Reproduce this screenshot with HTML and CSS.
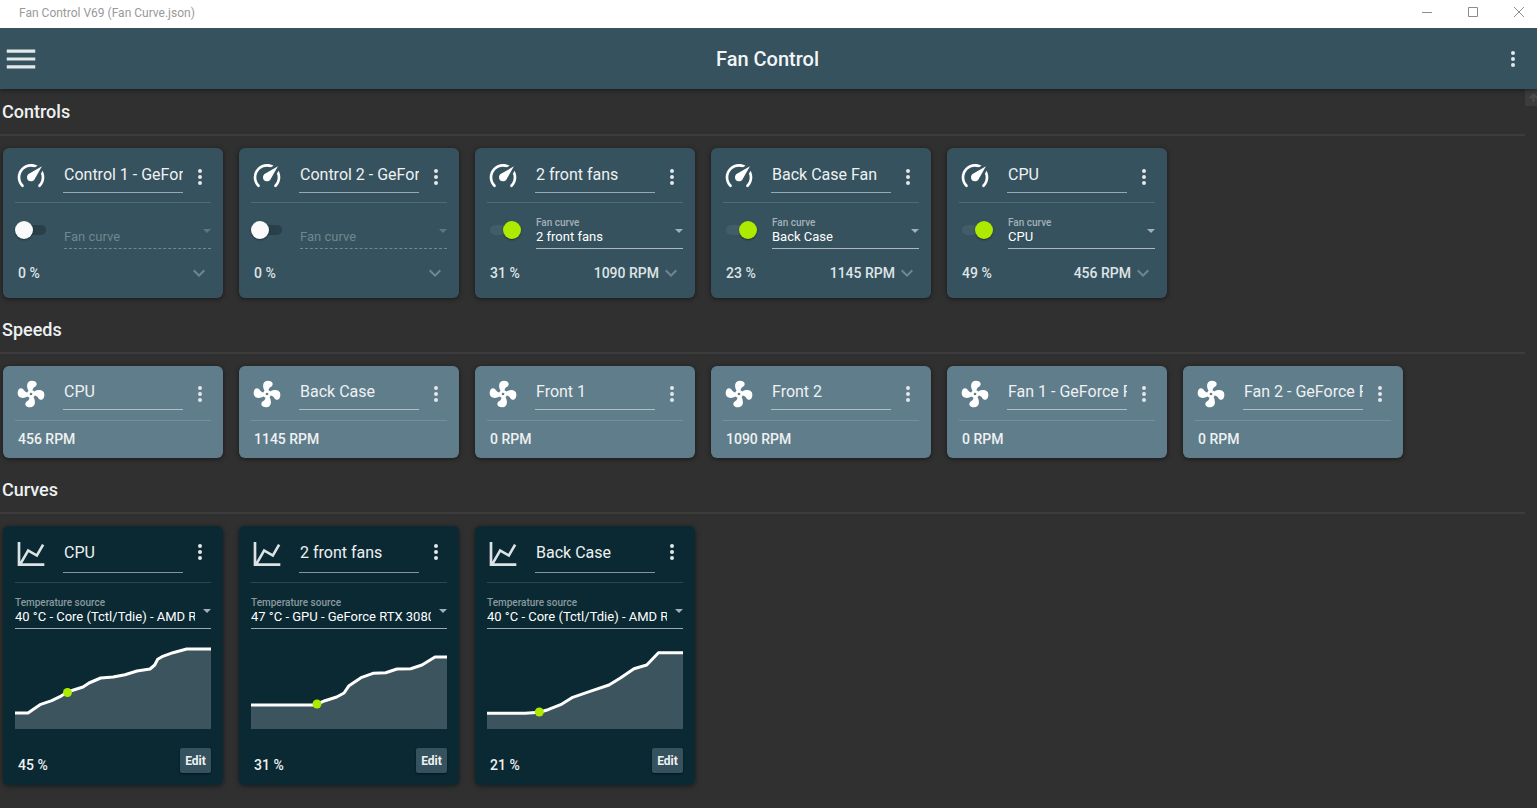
FILE: index.html
```html
<!DOCTYPE html>
<html lang="en">
<head>
<meta charset="utf-8">
<title>Fan Control V69 (Fan Curve.json)</title>
<link rel="stylesheet" href="styles.css">
</head>
<body>
<svg class="sprite" aria-hidden="true">
  <symbol id="gauge" viewBox="0 0 24 24"><path d="M12,16A3,3 0 0,1 9,13C9,11.88 9.61,10.9 10.5,10.39L20.21,4.77L14.68,14.35C14.18,15.33 13.17,16 12,16M12,3C13.81,3 15.5,3.5 16.97,4.32L14.87,5.53C14,5.19 13,5 12,5A8,8 0 0,0 4,13C4,15.21 4.89,17.21 6.34,18.65H6.35C6.74,19.04 6.74,19.67 6.35,20.06C5.96,20.45 5.32,20.45 4.93,20.07V20.07C3.12,18.26 2,15.76 2,13A10,10 0 0,1 12,3M22,13C22,15.76 20.88,18.26 19.07,20.07V20.07C18.68,20.45 18.05,20.45 17.66,20.06C17.27,19.67 17.27,19.04 17.66,18.65V18.65C19.11,17.2 20,15.21 20,13C20,12 19.81,11 19.46,10.1L20.67,8C21.5,9.5 22,11.18 22,13Z"/></symbol>
  <symbol id="fan" viewBox="0 0 24 24"><path d="M12,11A1,1 0 0,0 11,12A1,1 0 0,0 12,13A1,1 0 0,0 13,12A1,1 0 0,0 12,11M12.5,2C17,2 17.11,5.57 14.75,6.75C13.76,7.24 13.32,8.29 13.13,9.22C13.61,9.42 14.03,9.73 14.35,10.13C18.05,8.13 22.03,8.92 22.03,12.5C22.03,17 18.46,17.1 17.28,14.73C16.78,13.74 15.72,13.3 14.79,13.11C14.59,13.59 14.28,14 13.88,14.34C15.87,18.03 15.08,22 11.5,22C7,22 6.91,18.42 9.27,17.24C10.25,16.75 10.69,15.71 10.89,14.79C10.4,14.59 9.97,14.27 9.65,13.87C5.96,15.85 2,15.07 2,11.5C2,7 5.56,6.89 6.74,9.26C7.24,10.25 8.29,10.68 9.22,10.87C9.41,10.39 9.73,9.97 10.14,9.65C8.15,5.96 8.94,2 12.5,2Z"/></symbol>
  <symbol id="chart" viewBox="0 0 24 24"><path d="M16,11.78L20.24,4.45L21.97,5.45L16.74,14.5L10.23,10.75L5.46,19H22V21H2V3H4V17.54L9.5,8L16,11.78Z"/></symbol>
  <symbol id="menu" viewBox="0 0 24 24"><path d="M3,6H21V8H3V6M3,11H21V13H3V11M3,16H21V18H3V16Z"/></symbol>
  <symbol id="dots" viewBox="0 0 24 24"><path d="M12,16A2,2 0 0,1 14,18A2,2 0 0,1 12,20A2,2 0 0,1 10,18A2,2 0 0,1 12,16M12,10A2,2 0 0,1 14,12A2,2 0 0,1 12,14A2,2 0 0,1 10,12A2,2 0 0,1 12,10M12,4A2,2 0 0,1 14,6A2,2 0 0,1 12,8A2,2 0 0,1 10,6A2,2 0 0,1 12,4Z"/></symbol>
  <symbol id="chevron" viewBox="0 0 24 24"><path d="M7.41,8.58L12,13.17L16.59,8.58L18,10L12,16L6,10L7.41,8.58Z"/></symbol>
</svg>

<div class="window">
  <div class="titlebar">
    <span class="titlebar-text">Fan Control V69 (Fan Curve.json)</span>
    <div class="window-buttons">
      <button class="window-button" aria-label="Minimize"><svg viewBox="0 0 12 12"><path d="M1 6.500h10"/></svg></button>
      <button class="window-button" aria-label="Maximize"><svg viewBox="0 0 12 12"><path d="M1.500 1.500h9v9h-9z"/></svg></button>
      <button class="window-button" aria-label="Close"><svg viewBox="0 0 12 12"><path d="M1 1l10 10M11 1l-10 10"/></svg></button>
    </div>
  </div>

  <header class="appbar">
    <button class="icon-button menu-button" aria-label="Menu"><svg><use href="#menu"/></svg></button>
    <h1 class="app-title">Fan Control</h1>
    <button class="icon-button dots-button" aria-label="More options"><svg><use href="#dots"/></svg></button>
  </header>

  <div class="body">
    <main class="content">
      <section>
        <h2 class="section-title">Controls</h2>
        <div class="cards">
          <article class="card control">
            <div class="card-head">
              <svg class="card-icon"><use href="#gauge"/></svg>
              <input class="name" aria-label="Name" value="Control 1 - GeForce RTX 3080">
              <button class="icon-button dots-button" aria-label="Options"><svg><use href="#dots"/></svg></button>
            </div>
            <div class="control-row">
              <input class="switch" type="checkbox" aria-label="Enable Control 1">
              <div class="field disabled"><select class="select" aria-label="Fan curve" disabled><option>Fan curve</option></select></div>
            </div>
            <div class="card-foot"><span class="percent">0 %</span><button class="icon-button chevron" aria-label="Expand"><svg><use href="#chevron"/></svg></button></div>
          </article>
          <article class="card control">
            <div class="card-head">
              <svg class="card-icon"><use href="#gauge"/></svg>
              <input class="name" aria-label="Name" value="Control 2 - GeForce RTX 3080">
              <button class="icon-button dots-button" aria-label="Options"><svg><use href="#dots"/></svg></button>
            </div>
            <div class="control-row">
              <input class="switch" type="checkbox" aria-label="Enable Control 2">
              <div class="field disabled"><select class="select" aria-label="Fan curve" disabled><option>Fan curve</option></select></div>
            </div>
            <div class="card-foot"><span class="percent">0 %</span><button class="icon-button chevron" aria-label="Expand"><svg><use href="#chevron"/></svg></button></div>
          </article>
          <article class="card control">
            <div class="card-head">
              <svg class="card-icon"><use href="#gauge"/></svg>
              <input class="name" aria-label="Name" value="2 front fans">
              <button class="icon-button dots-button" aria-label="Options"><svg><use href="#dots"/></svg></button>
            </div>
            <div class="control-row">
              <input class="switch" type="checkbox" aria-label="Enable 2 front fans" checked>
              <div class="field"><label class="label" for="fc3">Fan curve</label><select class="select" id="fc3"><option>2 front fans</option></select></div>
            </div>
            <div class="card-foot"><span class="percent">31 %</span><span>1090 RPM</span><button class="icon-button chevron" aria-label="Expand"><svg><use href="#chevron"/></svg></button></div>
          </article>
          <article class="card control">
            <div class="card-head">
              <svg class="card-icon"><use href="#gauge"/></svg>
              <input class="name" aria-label="Name" value="Back Case Fan">
              <button class="icon-button dots-button" aria-label="Options"><svg><use href="#dots"/></svg></button>
            </div>
            <div class="control-row">
              <input class="switch" type="checkbox" aria-label="Enable Back Case Fan" checked>
              <div class="field"><label class="label" for="fc4">Fan curve</label><select class="select" id="fc4"><option>Back Case</option></select></div>
            </div>
            <div class="card-foot"><span class="percent">23 %</span><span>1145 RPM</span><button class="icon-button chevron" aria-label="Expand"><svg><use href="#chevron"/></svg></button></div>
          </article>
          <article class="card control">
            <div class="card-head">
              <svg class="card-icon"><use href="#gauge"/></svg>
              <input class="name" aria-label="Name" value="CPU">
              <button class="icon-button dots-button" aria-label="Options"><svg><use href="#dots"/></svg></button>
            </div>
            <div class="control-row">
              <input class="switch" type="checkbox" aria-label="Enable CPU" checked>
              <div class="field"><label class="label" for="fc5">Fan curve</label><select class="select" id="fc5"><option>CPU</option></select></div>
            </div>
            <div class="card-foot"><span class="percent">49 %</span><span>456 RPM</span><button class="icon-button chevron" aria-label="Expand"><svg><use href="#chevron"/></svg></button></div>
          </article>
        </div>
      </section>

      <section>
        <h2 class="section-title">Speeds</h2>
        <div class="cards">
          <article class="card speed">
            <div class="card-head">
              <svg class="card-icon"><use href="#fan"/></svg>
              <input class="name" aria-label="Name" value="CPU">
              <button class="icon-button dots-button" aria-label="Options"><svg><use href="#dots"/></svg></button>
            </div>
            <div class="rpm">456 RPM</div>
          </article>
          <article class="card speed">
            <div class="card-head">
              <svg class="card-icon"><use href="#fan"/></svg>
              <input class="name" aria-label="Name" value="Back Case">
              <button class="icon-button dots-button" aria-label="Options"><svg><use href="#dots"/></svg></button>
            </div>
            <div class="rpm">1145 RPM</div>
          </article>
          <article class="card speed">
            <div class="card-head">
              <svg class="card-icon"><use href="#fan"/></svg>
              <input class="name" aria-label="Name" value="Front 1">
              <button class="icon-button dots-button" aria-label="Options"><svg><use href="#dots"/></svg></button>
            </div>
            <div class="rpm">0 RPM</div>
          </article>
          <article class="card speed">
            <div class="card-head">
              <svg class="card-icon"><use href="#fan"/></svg>
              <input class="name" aria-label="Name" value="Front 2">
              <button class="icon-button dots-button" aria-label="Options"><svg><use href="#dots"/></svg></button>
            </div>
            <div class="rpm">1090 RPM</div>
          </article>
          <article class="card speed">
            <div class="card-head">
              <svg class="card-icon"><use href="#fan"/></svg>
              <input class="name" aria-label="Name" value="Fan 1 - GeForce RTX 3080">
              <button class="icon-button dots-button" aria-label="Options"><svg><use href="#dots"/></svg></button>
            </div>
            <div class="rpm">0 RPM</div>
          </article>
          <article class="card speed">
            <div class="card-head">
              <svg class="card-icon"><use href="#fan"/></svg>
              <input class="name" aria-label="Name" value="Fan 2 - GeForce RTX 3080">
              <button class="icon-button dots-button" aria-label="Options"><svg><use href="#dots"/></svg></button>
            </div>
            <div class="rpm">0 RPM</div>
          </article>
        </div>
      </section>

      <section>
        <h2 class="section-title">Curves</h2>
        <div class="cards">
          <article class="card curve">
            <div class="card-head">
              <svg class="card-icon"><use href="#chart"/></svg>
              <input class="name" aria-label="Name" value="CPU">
              <button class="icon-button dots-button" aria-label="Options"><svg><use href="#dots"/></svg></button>
            </div>
            <div class="field"><label class="label" for="ts1">Temperature source</label><select class="select" id="ts1"><option>40 °C - Core (Tctl/Tdie) - AMD Ryzen</option></select></div>
            <svg class="graph" viewBox="0 0 196 82">
              <path class="area" d="M0 66H13L25 57.700L36.700 53.700L45 49.700L52.300 45L68 40L74 36L85.700 31L98 30L110 27.700L122 24L135 22L139.700 18L142.700 12.300L147 9.700L158 5.700L171.700 2H196V82H0Z"/>
              <path class="line" d="M0 66H13L25 57.700L36.700 53.700L45 49.700L52.300 45L68 40L74 36L85.700 31L98 30L110 27.700L122 24L135 22L139.700 18L142.700 12.300L147 9.700L158 5.700L171.700 2H196"/>
              <circle class="point" cx="52.500" cy="45.500" r="4.500"/>
            </svg>
            <div class="card-foot"><span class="percent">45 %</span><button class="edit">Edit</button></div>
          </article>
          <article class="card curve">
            <div class="card-head">
              <svg class="card-icon"><use href="#chart"/></svg>
              <input class="name" aria-label="Name" value="2 front fans">
              <button class="icon-button dots-button" aria-label="Options"><svg><use href="#dots"/></svg></button>
            </div>
            <div class="field"><label class="label" for="ts2">Temperature source</label><select class="select" id="ts2"><option>47 °C - GPU - GeForce RTX 3080</option></select></div>
            <svg class="graph" viewBox="0 0 196 82">
              <path class="area" d="M0 58H64L74 53.700L85.700 50L93 46L98 38.700L110 30.700L122 26.300L134.700 25.700L146 22L159.700 21.700L171 18L184 10H196V82H0Z"/>
              <path class="line" d="M0 58H64L74 53.700L85.700 50L93 46L98 38.700L110 30.700L122 26.300L134.700 25.700L146 22L159.700 21.700L171 18L184 10H196"/>
              <circle class="point" cx="66" cy="57" r="4.500"/>
            </svg>
            <div class="card-foot"><span class="percent">31 %</span><button class="edit">Edit</button></div>
          </article>
          <article class="card curve">
            <div class="card-head">
              <svg class="card-icon"><use href="#chart"/></svg>
              <input class="name" aria-label="Name" value="Back Case">
              <button class="icon-button dots-button" aria-label="Options"><svg><use href="#dots"/></svg></button>
            </div>
            <div class="field"><label class="label" for="ts3">Temperature source</label><select class="select" id="ts3"><option>40 °C - Core (Tctl/Tdie) - AMD Ryzen</option></select></div>
            <svg class="graph" viewBox="0 0 196 82">
              <path class="area" d="M0 66.300H38L52.300 65.300L61 62.700L73.700 57.700L85.700 50.300L103 44.300L122 38L133 31.300L147 21.700L159.700 18L171.500 5.700H196V82H0Z"/>
              <path class="line" d="M0 66.300H38L52.300 65.300L61 62.700L73.700 57.700L85.700 50.300L103 44.300L122 38L133 31.300L147 21.700L159.700 18L171.500 5.700H196"/>
              <circle class="point" cx="52.300" cy="65" r="4.500"/>
            </svg>
            <div class="card-foot"><span class="percent">21 %</span><button class="edit">Edit</button></div>
          </article>
        </div>
      </section>
    </main>
    <div class="scroll-track">
      <button class="scroll-up" aria-label="Scroll up"><svg viewBox="0 0 17 17"><path d="M8.500 4l4.500 4.500-1.500 1.500-2-2V13h-2V8l-2 2L4 8.500z"/></svg></button>
    </div>
  </div>
</div>
</body>
</html>
```

FILE: styles.css
```css
*, *::before, *::after { box-sizing: border-box; }

body {
  margin: 0;
  background: #303030;
  color: #eef1f2;
  font-family: Roboto, "Liberation Sans", sans-serif;
  font-size: 14px;
}

button, input, select { font: inherit; color: inherit; margin: 0; }
button { padding: 0; border: 0; background: none; }

.sprite { position: absolute; width: 0; height: 0; }

.window { display: flex; flex-direction: column; height: 100vh; overflow: hidden; }

.titlebar {
  display: flex;
  flex: none;
  justify-content: space-between;
  align-items: flex-start;
  height: 28px;
  padding-left: 19px;
  background: #fff;
  color: #999;
}
.titlebar-text { font-size: 12px; line-height: 26px; }
.window-buttons { display: flex; height: 24px; margin-right: -5px; }
.window-button { display: grid; place-items: center; width: 46px; }
.window-button svg { width: 12px; height: 12px; fill: none; stroke: #8c8c8c; }

.appbar {
  display: grid;
  flex: none;
  grid-template-columns: 1fr auto 1fr;
  align-items: center;
  height: 61px;
  padding: 0 12px 0 2px;
  background: #35525e;
  box-shadow: 0 1px 5px rgba(0, 0, 0, .5);
  clip-path: inset(0 0 -8px 0);
  z-index: 1;
}
.app-title { margin: 0; padding-left: 8px; font-size: 20px; font-weight: 500; color: #f3f5f6; }
.appbar .dots-button { justify-self: end; }

.icon-button { display: block; }
.icon-button svg { display: block; width: 100%; height: 100%; fill: #e3e8ea; }
.dots-button { width: 24px; height: 24px; }
.menu-button { width: 38px; height: 38px; }

.body { display: flex; flex: 1; min-height: 0; }
.content { flex: 1; min-width: 0; overflow: hidden; }
.scroll-track { flex: none; width: 12px; overflow: hidden; }
.scroll-up { display: block; width: 17px; height: 17px; background: #3c3c3c; }
.scroll-up svg { display: block; fill: #4d4d4d; }

.section-title {
  margin: 0;
  padding: 0 2px;
  border-bottom: 2px solid #3c3c3c;
  font-size: 18px;
  font-weight: 500;
  line-height: 45px;
}
.cards { display: flex; flex-wrap: wrap; gap: 16px; padding: 12px 3px 9px; }

.card {
  width: 220px;
  padding: 0 12px;
  border-radius: 6px;
  box-shadow: 0 1px 5px rgba(0, 0, 0, .5);
}
.control { background: #35525e; }
.speed { background: #607d8b; }
.curve { background: #0a2933; }

.card-head {
  display: flex;
  align-items: flex-start;
  height: 55px;
  border-bottom: 1px solid rgba(255, 255, 255, .14);
}
.card-icon { flex: none; width: 32px; height: 32px; margin: 12px 16px 0 0; fill: #fff; }
.name {
  width: 120px;
  height: 35px;
  margin-top: 10px;
  padding: 0 0 2px 1px;
  border: 0;
  border-bottom: 1px solid rgba(255, 255, 255, .5);
  outline: 0;
  background: none;
  font-size: 16px;
}
.card-head .dots-button { flex: none; margin: 17px 0 0 5px; }
.speed .name { height: 34px; }
.speed .dots-button { margin-top: 16px; }
.curve .card-head { height: 57px; }
.curve .name { height: 39px; margin-top: 8px; }
.curve .dots-button { margin-top: 14px; }
.curve .card-icon { fill: #dde2e4; }

.control-row { display: flex; padding-top: 14px; }
.control-row .field { flex: 1; }
.curve .field { margin-top: 14px; }

.switch {
  position: relative;
  flex: none;
  appearance: none;
  width: 34px;
  height: 18px;
  margin: 4px 15px 0 0;
}
.switch::before {
  content: "";
  position: absolute;
  inset: 4px 3px;
  border-radius: 6px;
  background: #293f49;
}
.switch::after {
  content: "";
  position: absolute;
  top: 0;
  left: 0;
  width: 18px;
  height: 18px;
  border-radius: 50%;
  background: #fafafa;
  box-shadow: 0 1px 2px rgba(0, 0, 0, .4);
}
.switch:checked::before { background: #435d68; }
.switch:checked::after { left: 16px; background: #aeea00; }

.field {
  position: relative;
  display: flex;
  flex-direction: column;
  justify-content: flex-end;
  height: 32px;
  min-width: 0;
}
.label { font-size: 10px; font-weight: 500; line-height: 12px; color: #a3b1b7; }
.curve .label { color: #8b999e; }
.select {
  appearance: none;
  width: 100%;
  height: 20px;
  padding: 0 16px 3px 0;
  border: 0;
  border-bottom: 1px solid rgba(255, 255, 255, .6);
  border-radius: 0;
  background: none;
  color: #fff;
  font-size: 13px;
  line-height: 16px;
  text-overflow: clip;
}
.field::after {
  content: "";
  position: absolute;
  right: 0;
  bottom: 16px;
  border: 4px solid transparent;
  border-top-color: #a3b1b7;
  border-bottom: 0;
  pointer-events: none;
}
.field.disabled .select { color: #71868f; opacity: 1; border-bottom: 1px dashed #71868f; }
.field.disabled::after { border-top-color: #5f7680; }

.card-foot { display: flex; align-items: center; line-height: 20px; font-weight: 500; color: #dfe4e6; }
.percent { flex: 1; padding-left: 3px; }
.control .card-foot { padding: 12px 0 13px; }
.chevron { width: 24px; height: 24px; }
.chevron svg { fill: #72868e; }

.rpm { padding: 8px 3px 9px; line-height: 20px; font-weight: 500; }

.graph { display: block; width: 100%; margin-top: 18px; overflow: visible; }
.area { fill: #3c545d; }
.line { fill: none; stroke: #fff; stroke-width: 3; stroke-linejoin: round; }
.point { fill: #aeea00; }

.curve .card-foot { padding: 19px 0 10px; align-items: flex-start; color: #eef1f2; }
.curve .percent { padding-top: 7px; }
.edit {
  width: 31px;
  height: 25px;
  border-radius: 2px;
  background: #35525e;
  box-shadow: 0 1px 2px rgba(0, 0, 0, .5);
  font-size: 12px;
  font-weight: 700;
}
```
